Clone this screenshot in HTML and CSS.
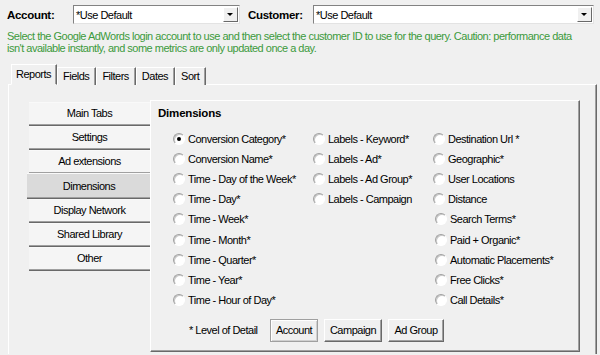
FILE: index.html
```html
<!DOCTYPE html>
<html lang="en">
<head>
    <meta charset="UTF-8">
    <title>Report Options</title>
    <link rel="stylesheet" href="styles.css">
</head>
<body>

    <!-- Cuenta y cliente -->
    <div class="top-row">
        <label class="lbl lbl-account">Account:</label>
        <div class="combo combo-account"><span class="combo-text">*Use Default</span><span class="combo-btn"></span></div>
        <label class="lbl lbl-customer">Customer:</label>
        <div class="combo combo-customer"><span class="combo-text">*Use Default</span><span class="combo-btn"></span></div>
    </div>

    <p class="hint">Select the Google AdWords login account to use and then select the customer ID to use for the query. Caution: performance data isn't available instantly, and some metrics are only updated once a day.</p>

    <!-- Pestañas -->
    <div class="tabs">
        <div class="tab active">Reports</div>
        <div class="tab">Fields</div>
        <div class="tab">Filters</div>
        <div class="tab">Dates</div>
        <div class="tab">Sort</div>
    </div>

    <div class="tab-page">
        <div class="nav">
            <div class="nav-btn">Main Tabs</div>
            <div class="nav-btn">Settings</div>
            <div class="nav-btn">Ad extensions</div>
            <div class="nav-btn selected">Dimensions</div>
            <div class="nav-btn">Display Network</div>
            <div class="nav-btn">Shared Library</div>
            <div class="nav-btn">Other</div>
        </div>

        <div class="panel">
            <h3 class="panel-title">Dimensions</h3>

            <div class="options">
                <div class="col col-1">
                    <div class="opt"><span class="radio checked"></span>Conversion Category*</div>
                    <div class="opt"><span class="radio"></span>Conversion Name*</div>
                    <div class="opt"><span class="radio"></span>Time - Day of the Week*</div>
                    <div class="opt"><span class="radio"></span>Time - Day*</div>
                    <div class="opt"><span class="radio"></span>Time - Week*</div>
                    <div class="opt"><span class="radio"></span>Time - Month*</div>
                    <div class="opt"><span class="radio"></span>Time - Quarter*</div>
                    <div class="opt"><span class="radio"></span>Time - Year*</div>
                    <div class="opt"><span class="radio"></span>Time - Hour of Day*</div>
                </div>
                <div class="col col-2">
                    <div class="opt"><span class="radio"></span>Labels - Keyword*</div>
                    <div class="opt"><span class="radio"></span>Labels - Ad*</div>
                    <div class="opt"><span class="radio"></span>Labels - Ad Group*</div>
                    <div class="opt"><span class="radio"></span>Labels - Campaign</div>
                </div>
                <div class="col col-3">
                    <div class="opt"><span class="radio"></span>Destination Url *</div>
                    <div class="opt"><span class="radio"></span>Geographic*</div>
                    <div class="opt"><span class="radio"></span>User Locations</div>
                    <div class="opt"><span class="radio"></span>Distance</div>
                    <div class="opt shift"><span class="radio"></span>Search Terms*</div>
                    <div class="opt shift"><span class="radio"></span>Paid + Organic*</div>
                    <div class="opt shift"><span class="radio"></span>Automatic Placements*</div>
                    <div class="opt shift"><span class="radio"></span>Free Clicks*</div>
                    <div class="opt shift"><span class="radio"></span>Call Details*</div>
                </div>
            </div>

            <div class="detail">
                <span class="detail-lbl">* Level of Detail</span>
                <button class="btn btn-default">Account</button>
                <button class="btn btn-campaign">Campaign</button>
                <button class="btn btn-adgroup">Ad Group</button>
            </div>
        </div>
    </div>

</body>
</html>
```

FILE: styles.css
```css
body {
    font-family: "Liberation Sans", Arial, sans-serif;
    font-size: 11px;
    letter-spacing: -0.5px;
    color: #000;
    background-color: #f0f0f0;
    margin: 0;
    width: 600px;
    height: 355px;
    overflow: hidden;
}

/* Fila superior */
.top-row {
    display: flex;
    align-items: center;
    padding: 5px 0 0 7px;
    height: 19px;
}

.lbl {
    font-weight: bold;
    font-size: 11.5px;
    letter-spacing: -0.3px;
}

.lbl-account {
    width: 66px;
}

.lbl-customer {
    width: 65px;
    margin-left: 8px;
}

.combo {
    display: flex;
    align-items: center;
    background-color: #fff;
    border: 1px solid;
    border-color: #828282 #e3e3e3 #e3e3e3 #828282;
    box-sizing: border-box;
    height: 19px;
    padding: 1px;
}

.combo-account {
    width: 167px;
}

.combo-customer {
    width: 281px;
}

.combo-text {
    flex: 1;
    padding-left: 1px;
}

.combo-btn {
    width: 15px;
    height: 15px;
    background-color: #f0f0f0;
    box-sizing: border-box;
    border: 1px solid;
    border-color: #fff #696969 #696969 #fff;
    position: relative;
}

.combo-btn::after {
    content: "";
    position: absolute;
    left: 3px;
    top: 5px;
    border-left: 3px solid transparent;
    border-right: 3px solid transparent;
    border-top: 3px solid #000;
}

.hint {
    margin: 6px 0 0 7px;
    width: 568px;
    line-height: 12px;
    color: #3c9a3c;
}

/* Pestañas */
.tabs {
    display: flex;
    align-items: flex-end;
    margin: 10px 0 0 11px;
    height: 20px;
}

.tab {
    height: 17px;
    line-height: 17px;
    padding: 0 6px 0 5px;
    background-color: #f0f0f0;
    border-top: 1px solid #fff;
    border-left: 1px solid #fff;
    border-right: 1px solid #696969;
    box-shadow: inset -1px 0 0 #a0a0a0;
    margin-bottom: -1px;
}

.tab.active {
    line-height: 19px;
    padding: 0 5px 0 4px;
    position: relative;
    z-index: 1;
    border-bottom: 1px solid #f0f0f0;
    height: 19px;
}

.tab-page {
    display: flex;
    align-items: flex-start;
    margin-left: 8px;
    width: 589px;
    height: 270px;
    border-top: 1px solid #fff;
    border-left: 1px solid #fff;
    border-right: 1px solid #696969;
    box-shadow: inset -1px 0 0 #a0a0a0;
    padding: 15px 0 0 20px;
    box-sizing: border-box;
}

/* Menú lateral */
.nav {
    width: 121px;
    margin-top: 2px;
}

.nav-btn {
    height: 24px;
    line-height: 21px;
    text-align: center;
    background-color: #f5f5f5;
    box-sizing: border-box;
    border-top: 1px solid #f9f9f9;
    border-bottom: 1px solid #696969;
    box-shadow: inset 0 -1px 0 #a0a0a0;
}

.nav-btn.selected {
    background-color: #dadada;
    height: 26px;
    margin: -1px -1px 0 -2px;
    line-height: 24px;
}

/* Panel de dimensiones */
.panel {
    width: 430px;
    height: 252px;
    box-sizing: border-box;
    border-top: 1px solid #fff;
    border-left: 1px solid #fff;
    border-right: 1px solid #696969;
    border-bottom: 1px solid #696969;
    box-shadow: inset -1px -1px 0 #a0a0a0;
    padding: 5px 0 0 7px;
}

.panel-title {
    margin: 0;
    font-size: 11.5px;
    letter-spacing: -0.2px;
    font-weight: bold;
    line-height: 14px;
}

.options {
    display: flex;
    margin-top: 9px;
    padding-left: 15px;
}

.col-1 {
    width: 140px;
}

.col-2 {
    width: 120px;
}

.opt {
    display: flex;
    align-items: center;
    height: 20.1px;
    white-space: nowrap;
}

.opt.shift {
    padding-left: 2px;
}

.radio {
    width: 12px;
    height: 12px;
    box-sizing: border-box;
    border-radius: 50%;
    background-color: #fff;
    border: 1px solid;
    border-color: #a0a0a0 #fff #fff #a0a0a0;
    box-shadow: inset 1px 1px 0 #c8c8c8;
    margin-right: 3px;
    position: relative;
}

.radio.checked::after {
    content: "";
    position: absolute;
    left: 3px;
    top: 3px;
    width: 4px;
    height: 4px;
    border-radius: 50%;
    background-color: #000;
}

/* Nivel de detalle */
.detail {
    display: flex;
    align-items: center;
    margin-top: 9px;
    padding-left: 31px;
}

.detail-lbl {
    width: 81px;
}

.btn {
    font-family: "Liberation Sans", Arial, sans-serif;
    font-size: 11px;
    letter-spacing: -0.5px;
    height: 23px;
    padding: 0;
    background-color: #f0f0f0;
    border: 1px solid;
    border-color: #fff #696969 #696969 #fff;
    box-shadow: inset -1px -1px 0 #a0a0a0;
    margin-right: 6px;
}

.btn-default {
    width: 48px;
    border-color: #a0a0a0;
    box-shadow: inset 1px 1px 0 #fff, inset -1px -1px 0 #d0d0d0;
}

.btn-campaign {
    width: 58px;
}

.btn-adgroup {
    width: 56px;
}
```
